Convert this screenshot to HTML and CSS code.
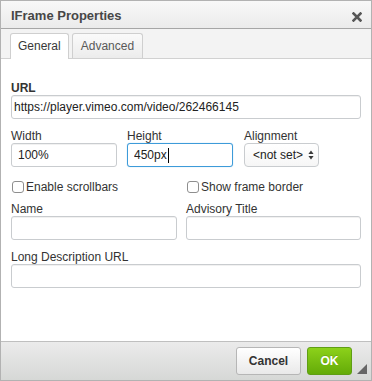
FILE: index.html
```html
<!DOCTYPE html>
<html>
<head>
    <meta name="viewport" content="width=device-width, initial-scale=1.0">
    <title>IFrame Properties</title>
    <link rel="stylesheet" href="styles.css">
</head>
<body>
    <div class="dialog">
        <div class="title-bar">
            <span class="title">IFrame Properties</span>
            <a class="close" title="Close">
                <svg width="10" height="10" viewBox="0 0 10 10">
                    <path d="M1.5 1.5 L8.5 8.5 M8.5 1.5 L1.5 8.5" stroke="#575757" stroke-width="2.6" stroke-linecap="square"/>
                </svg>
            </a>
        </div>

        <div class="tabs">
            <span class="tab active">General</span>
            <span class="tab">Advanced</span>
        </div>

        <div class="content">
            <div class="field">
                <label class="label strong">URL</label>
                <input class="text url" type="text" value="https://player.vimeo.com/video/262466145">
            </div>

            <div class="row three">
                <div class="field">
                    <label class="label">Width</label>
                    <input class="text small" type="text" value="100%">
                </div>
                <div class="field">
                    <label class="label">Height</label>
                    <div class="input-wrap">
                        <input class="text small focused" type="text" value="450px">
                        <span class="caret"></span>
                    </div>
                </div>
                <div class="field">
                    <label class="label">Alignment</label>
                    <div class="select-wrap">
                        <select class="select">
                            <option>&lt;not set&gt;</option>
                            <option>Left</option>
                            <option>Right</option>
                        </select>
                        <svg class="select-arrows" width="6" height="10" viewBox="0 0 6 10">
                            <path d="M3 0.5 L5.6 4 L0.4 4 Z M3 9.5 L5.6 6 L0.4 6 Z" fill="#3a3a3a"/>
                        </svg>
                    </div>
                </div>
            </div>

            <div class="row two checks">
                <label class="check"><input type="checkbox"> Enable scrollbars</label>
                <label class="check"><input type="checkbox"> Show frame border</label>
            </div>

            <div class="row two">
                <div class="field">
                    <label class="label">Name</label>
                    <input class="text name" type="text">
                </div>
                <div class="field">
                    <label class="label">Advisory Title</label>
                    <input class="text" type="text">
                </div>
            </div>

            <div class="field gap">
                <label class="label">Long Description URL</label>
                <input class="text" type="text">
            </div>
        </div>

        <div class="footer">
            <button class="btn cancel">Cancel</button>
            <button class="btn ok">OK</button>
            <span class="grip"></span>
        </div>
    </div>
</body>
</html>
```

FILE: styles.css
```css
* {
    box-sizing: border-box;
}

body {
    margin: 0;
    font-family: "Liberation Sans", Arial, sans-serif;
    font-size: 12px;
    color: #333;
    background: #fff;
}

.dialog {
    width: 372px;
    height: 381px;
    border: 1px solid #b2b2b2;
    display: flex;
    flex-direction: column;
    position: relative;
}

.title-bar {
    height: 28px;
    padding: 7px 9px 0 10px;
    background: linear-gradient(#f8f8f8, #ebebeb);
    border-bottom: 1px solid #a6a6a6;
    display: flex;
    justify-content: space-between;
}

.title {
    font-size: 13px;
    font-weight: bold;
    line-height: 16px;
    color: #474747;
}

.close {
    display: flex;
    padding-top: 4px;
}

.tabs {
    height: 30px;
    padding: 5px 0 0 9px;
    background: #f3f3f3;
    border-bottom: 1px solid #d1d1d1;
    display: flex;
    align-items: flex-end;
    gap: 3px;
}

.tab {
    height: 25px;
    padding: 0 8px;
    line-height: 24px;
    font-size: 12px;
    color: #595959;
    background: linear-gradient(#fafafa, #ececec);
    border: 1px solid #cfcfcf;
    border-bottom: none;
    border-radius: 3px 3px 0 0;
}

.tab.active {
    height: 26px;
    padding: 0 7px;
    margin-bottom: -1px;
    background: #fff;
    color: #383838;
    line-height: 25px;
}

.content {
    flex: 1;
    padding: 22px 10px 0 10px;
    background: #fff;
}

.label {
    display: block;
    line-height: 14px;
    color: #333;
}

.label.strong {
    font-weight: bold;
}

.text {
    display: block;
    width: 100%;
    height: 24px;
    padding: 0 6px;
    font-family: inherit;
    font-size: 12px;
    color: #222;
    background: #fff;
    border: 1px solid #c9cccf;
    border-radius: 3px;
    box-shadow: inset 0 1px 0 #f1f1f1;
    outline: none;
}

.text.url {
    padding-left: 2px;
}

.text.small {
    width: 106px;
}

.text.name {
    width: 166px;
}

.text.focused {
    border-color: #3d9bd9;
    box-shadow: 0 0 1px rgba(61, 155, 217, 0.6);
}

.input-wrap {
    position: relative;
}

.caret {
    position: absolute;
    left: 41px;
    top: 5px;
    width: 1px;
    height: 15px;
    background: #000;
}

.row {
    display: grid;
    margin-top: 10px;
}

.row.three {
    grid-template-columns: 116px 117px 1fr;
}

.row.two {
    grid-template-columns: 175px 1fr;
}

.row.checks {
    margin-top: 13px;
    height: 14px;
}

.row.checks + .row {
    margin-top: 8px;
}

.field.gap {
    margin-top: 10px;
}

.check {
    display: flex;
    align-items: center;
    gap: 2px;
    line-height: 14px;
    color: #333;
}

.check input {
    appearance: none;
    -webkit-appearance: none;
    width: 12px;
    height: 12px;
    margin: 0 0 0 1px;
    border: 1px solid #8e8e8e;
    border-radius: 3px;
    background: #fff;
}

.select-wrap {
    position: relative;
    width: 75px;
}

.select {
    appearance: none;
    -webkit-appearance: none;
    display: block;
    width: 75px;
    height: 24px;
    padding: 0 0 0 8px;
    font-family: inherit;
    font-size: 12px;
    color: #222;
    background: linear-gradient(#fff, #f6f6f6);
    border: 1px solid #c9cccf;
    border-radius: 4px;
}

.select-arrows {
    position: absolute;
    right: 5px;
    top: 7px;
}

.footer {
    height: 39px;
    padding: 5px 19px 0 0;
    background: linear-gradient(#ebebeb, #d6d8d6);
    border-top: 1px solid #bfbfbf;
    display: flex;
    justify-content: flex-end;
    align-items: flex-start;
    gap: 6px;
}

.btn {
    height: 28px;
    font-family: inherit;
    font-size: 12px;
    font-weight: bold;
    border-radius: 3px;
    cursor: pointer;
}

.cancel {
    width: 65px;
    color: #333;
    background: linear-gradient(#fff, #e9e9e9);
    border: 1px solid #b6b6b6;
}

.ok {
    width: 45px;
    color: #fff;
    background: linear-gradient(#8cd11a, #64ab08);
    border: 1px solid #5f9e14;
    text-shadow: 0 -1px 0 rgba(0, 0, 0, 0.15);
}

.grip {
    position: absolute;
    right: 4px;
    bottom: 6px;
    width: 0;
    height: 0;
    border-left: 10px solid transparent;
    border-bottom: 10px solid #666;
}
```
